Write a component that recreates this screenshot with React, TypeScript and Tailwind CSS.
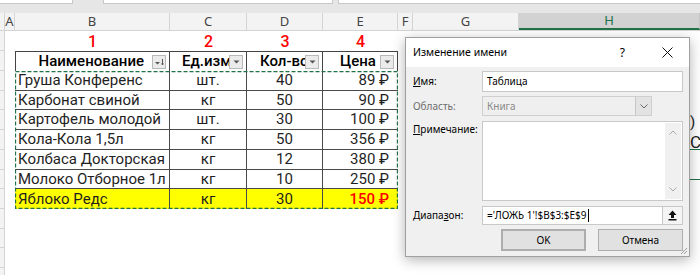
import React from "react";

const rows: [string, string, string, string][] = [
  ["Груша Конференс", "шт.", "40", "89 ₽"],
  ["Карбонат свиной", "кг", "50", "90 ₽"],
  ["Картофель молодой", "шт.", "30", "100 ₽"],
  ["Кола-Кола 1,5л", "кг", "50", "356 ₽"],
  ["Колбаса Докторская", "кг", "12", "380 ₽"],
  ["Молоко Отборное 1л", "кг", "10", "250 ₽"],
  ["Яблоко Редс", "кг", "30", "150 ₽"],
];
const rowH = ["h-[20px]", "h-[19px]", "h-[20px]", "h-[20px]", "h-[20px]", "h-[19px]", "h-[20px]"];
const stripH = [
  "h-[20px]", "h-[20px]",
  "h-[20px]", "h-[19px]", "h-[20px]", "h-[20px]", "h-[20px]", "h-[19px]", "h-[20px]",
  "h-[20px]", "h-[19px]", "h-[20px]", "h-[20px]",
];

function FilterBtn({ sorted }: { sorted?: boolean }) {
  return (
    <div className="absolute right-[3px] bottom-[2px] w-[14px] h-[14px] bg-[#ebebeb] border border-[#b9b9b9] flex items-center justify-center">
      {sorted ? (
        <svg width="10" height="8" viewBox="0 0 10 8">
          <polygon points="1,4 6,4 3.5,6.5" fill="#555" />
          <line x1="8.5" y1="1" x2="8.5" y2="7" stroke="#555" strokeWidth="1" />
          <polyline points="7.5,5.5 8.5,7 9.5,5.5" fill="none" stroke="#555" strokeWidth="0.8" />
        </svg>
      ) : (
        <svg width="7" height="4" viewBox="0 0 7 4">
          <polygon points="0.5,0.5 6.5,0.5 3.5,3.5" fill="#555" />
        </svg>
      )}
    </div>
  );
}

function ColHdr({ w, label, sel }: { w: string; label: string; sel?: boolean }) {
  return (
    <div
      className={`${w} h-full flex items-center justify-center border-r ${
        sel
          ? "bg-[#d2d2d2] text-[#217346] border-[#c6c6c6] border-b-2 border-b-[#217346]"
          : "border-[#d4d4d4] text-[#444]"
      }`}
    >
      {label}
    </div>
  );
}

export default function App() {
  return (
    <div
      className="relative w-[700px] h-[275px] overflow-hidden bg-white"
      style={{ fontFamily: "Roboto, 'Noto Sans', sans-serif" }}
    >
      {/* top strip */}
      <div className="h-[13px] bg-[#e6e6e6] flex items-start">
        <div className="w-[73px] h-[4px] bg-white border-b border-r border-[#c8c8c8]" />
        <div className="w-[30px]" />
        <div className="w-[230px] h-[4px] bg-white border-b border-l border-r border-[#c8c8c8]" />
        <div className="w-[5px]" />
        <div className="flex-1 h-[4px] bg-white border-b border-l border-[#c8c8c8]" />
      </div>

      {/* column headers */}
      <div
        className="flex h-[18px] bg-[#f3f3f3] border-b border-[#d4d4d4] text-[13px]"
        style={{ fontFamily: "'Noto Sans', sans-serif" }}
      >
        <ColHdr w="w-[5px]" label="" />
        <ColHdr w="w-[10px]" label="A" />
        <ColHdr w="w-[155px]" label="B" />
        <ColHdr w="w-[77px]" label="C" />
        <ColHdr w="w-[76px]" label="D" />
        <ColHdr w="w-[75px]" label="E" />
        <ColHdr w="w-[15px]" label="F" />
        <ColHdr w="w-[106px]" label="G" />
        <ColHdr w="flex-1" label="H" sel />
      </div>

      {/* sheet body */}
      <div className="relative flex">
        {/* row header strip */}
        <div className="w-[5px] flex flex-col bg-[#f3f3f3] border-r border-[#d4d4d4]">
          {stripH.map((h, i) => (
            <div key={i} className={`${h} border-b border-[#d4d4d4]`} />
          ))}
        </div>
        <div className="w-[10px]" />

        {/* table */}
        <div className="w-[383px] flex flex-col text-[15px] text-[#1f1f1f]">
          {/* row 1: red numbers */}
          <div className="flex h-[20px] text-[16px] font-medium text-[#ff0000] items-center pt-[2px]">
            <div className="w-[155px] text-center">1</div>
            <div className="w-[77px] text-center">2</div>
            <div className="w-[76px] text-center">3</div>
            <div className="w-[75px] text-center">4</div>
          </div>
          {/* header */}
          <div className="flex h-[20px] border-t border-[#444] font-medium text-black text-[15px]">
            <div className="relative w-[155px] border-l border-r border-[#444] flex items-center justify-end pr-[25px] whitespace-nowrap">
              Наименование
              <FilterBtn sorted />
            </div>
            <div className="relative w-[77px] border-r border-[#444] flex items-center pl-[12px] overflow-hidden whitespace-nowrap">
              Ед.изм
              <FilterBtn />
            </div>
            <div className="relative w-[76px] border-r border-[#444] flex items-center pl-[13px] overflow-hidden whitespace-nowrap">
              Кол-во
              <FilterBtn />
            </div>
            <div className="relative w-[75px] border-r border-[#444] flex items-center pl-[17px]">
              Цена
              <FilterBtn />
            </div>
          </div>
          {/* data */}
          <div className="relative flex flex-col">
            {rows.map((r, i) => {
              const yellow = i === rows.length - 1;
              const bg = yellow ? "bg-[#ffff00]" : "";
              const last = i === rows.length - 1;
              return (
                <div key={i} className={`flex ${rowH[i]} ${last ? "" : "border-b border-[#4a4a4a]"} ${bg}`}>
                  <div className="w-[155px] border-r border-[#4a4a4a] flex items-center pl-[3px] whitespace-nowrap">
                    {r[0]}
                  </div>
                  <div className="w-[77px] border-r border-[#4a4a4a] flex items-center justify-center">
                    {r[1]}
                  </div>
                  <div className="w-[76px] border-r border-[#4a4a4a] flex items-center justify-center">
                    {r[2]}
                  </div>
                  <div
                    className={`w-[75px] flex items-center justify-end pr-[9px] ${
                      yellow ? "text-[#ff0000] font-medium" : ""
                    }`}
                  >
                    {r[3]}
                  </div>
                </div>
              );
            })}
            <svg className="absolute left-0 top-0" width="383" height="138" viewBox="0 0 383 138">
              <rect
                x="0.5"
                y="0.5"
                width="382"
                height="137"
                fill="none"
                stroke="#217346"
                strokeWidth="1.3"
                strokeDasharray="4 2"
              />
            </svg>
          </div>
        </div>

        {/* sheet objects behind the dialog at the right edge */}
        <div className="absolute left-[690px] top-[84px] text-[15px] text-[#222] leading-none">)</div>
        <div className="absolute left-[690px] top-[103px] text-[17px] text-[#222] leading-none">С</div>
        <div className="absolute left-[690px] top-[118px] w-[10px] h-[1px] bg-[#217346]" />
        <div className="absolute left-[690px] top-[148px] w-[10px] h-[1px] bg-[#217346]" />
      </div>

      {/* dialog */}
      <div
        className="absolute left-[405px] top-[37px] w-[285px] h-[220px] border border-[#a0a0a0] bg-[#f0f0f0] shadow-[0_3px_12px_rgba(0,0,0,0.3)] flex flex-col text-[10px] text-black"
        style={{ fontFamily: "'Segoe UI', 'Noto Sans', sans-serif" }}
      >
        <div className="h-[29px] bg-white flex items-center pl-[7px] pr-[16px] text-[10.5px]">
          <div className="flex-1">Изменение имени</div>
          <div className="text-[12px] mr-[37px]">?</div>
          <svg width="11" height="11" viewBox="0 0 11 11">
            <path d="M0.5 0.5 L10.5 10.5 M10.5 0.5 L0.5 10.5" stroke="#111" strokeWidth="1" />
          </svg>
        </div>
        <div className="flex-1 flex flex-col pl-[7px] pr-[6px] pt-[4px]">
          {/* Имя */}
          <div className="flex items-center h-[21px]">
            <div className="w-[69px]">
              <span className="underline">И</span>мя:
            </div>
            <div className="flex-1 h-full bg-white border border-[#c8c8c8] flex items-center pl-[4px]">
              Таблица
            </div>
          </div>
          {/* Область */}
          <div className="flex items-center h-[20px] mt-[4px]">
            <div className="w-[69px] text-[#6d6d6d]">Область:</div>
            <div className="w-[170px] h-full bg-[#efefef] border border-[#cfcfcf] flex items-center pl-[4px] text-[#8a8a8a]">
              <div className="flex-1">Книга</div>
              <div className="w-[16px] h-full bg-[#e3e3e3] border-l border-[#c6c6c6] flex items-center justify-center">
                <svg width="8" height="5" viewBox="0 0 8 5">
                  <polyline points="0.5,0.5 4,4 7.5,0.5" fill="none" stroke="#666" strokeWidth="1" />
                </svg>
              </div>
            </div>
          </div>
          {/* Примечание */}
          <div className="flex items-start h-[80px] mt-[5px]">
            <div className="w-[69px] pt-[1px] whitespace-nowrap">
              <span className="underline">П</span>римечание:
            </div>
            <div className="flex-1 h-full bg-white border border-[#c8c8c8] flex justify-end p-[1px]">
              <div className="w-[16px] h-full bg-[#f0f0f0] flex flex-col items-center justify-between py-[7px]">
                <svg width="8" height="5" viewBox="0 0 8 5">
                  <polyline points="0.5,4.5 4,1 7.5,4.5" fill="none" stroke="#aaa" strokeWidth="1" />
                </svg>
                <svg width="8" height="5" viewBox="0 0 8 5">
                  <polyline points="0.5,0.5 4,4 7.5,0.5" fill="none" stroke="#aaa" strokeWidth="1" />
                </svg>
              </div>
            </div>
          </div>
          {/* Диапазон */}
          <div className="flex items-center h-[19px] mt-[5px]">
            <div className="w-[69px]">
              Диапа<span className="underline">з</span>он:
            </div>
            <div className="flex-1 h-full bg-white border border-[#c8c8c8] flex items-center">
              <div className="flex-1 pl-[4px] flex items-center whitespace-nowrap">
                ='ЛОЖЬ 1'!$B$3:$E$9
                <span className="inline-block w-[1px] h-[13px] bg-black ml-[1px]" />
              </div>
              <div className="w-[20px] h-full border-l border-[#c8c8c8] bg-[#f4f4f4] flex items-center justify-center">
                <svg width="9" height="11" viewBox="0 0 9 11">
                  <polygon points="4.5,0.5 8.5,5 6,5 6,8 3,8 3,5 0.5,5" fill="#111" />
                  <rect x="0.5" y="9" width="8" height="1.5" fill="#111" />
                </svg>
              </div>
            </div>
          </div>
          {/* buttons */}
          <div className="flex justify-end mt-[4px] gap-[12px]">
            <div className="w-[85px] h-[22px] bg-[#e1e1e1] border-2 border-[#adadad] flex items-center justify-center">
              OK
            </div>
            <div className="w-[85px] h-[22px] bg-[#e1e1e1] border border-[#adadad] flex items-center justify-center">
              Отмена
            </div>
          </div>
        </div>
        <svg className="absolute right-[1px] bottom-[1px]" width="8" height="8" viewBox="0 0 8 8">
          <path d="M7 1 L1 7 M7 4 L4 7" stroke="#9a9a9a" strokeWidth="1" />
        </svg>
      </div>
    </div>
  );
}
